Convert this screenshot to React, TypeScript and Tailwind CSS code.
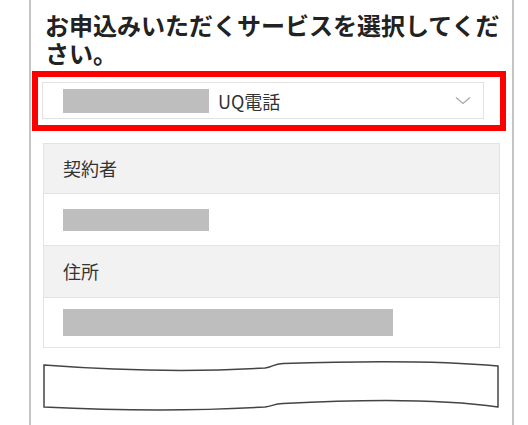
import React from "react";

export default function App() {
  return (
    <div
      className="w-[528px] h-[425px] bg-white overflow-hidden"
      style={{ fontFamily: '"Noto Sans CJK JP", "Noto Sans", sans-serif' }}
    >
      <div className="ml-[29px] w-[485px] h-[425px] border-x-2 border-[#c4c4c4] flex flex-col">
        <h1 className="pl-[14px] pt-[11px] w-[474px] text-[24px] leading-[28px] font-bold text-[#222]">
          お申込みいただくサービスを選択してください。
        </h1>

        <div className="mt-[4px] ml-[1px] w-[474px] h-[60px] border-[6px] border-[#ff0000] pt-[5px] pl-[4px]">
          <div className="w-[442px] h-[37px] border border-[#e2e2e2] bg-white flex items-center pl-[20px] pr-[12px]">
            <div className="w-[146px] h-[24px] bg-[#bebebe]" />
            <span className="ml-[9px] text-[18px] leading-none text-[#333]">UQ電話</span>
            <svg className="ml-auto" width="16" height="9" viewBox="0 0 16 9" fill="none">
              <path d="M1 1.5 L8 7.5 L15 1.5" stroke="#a8a8a8" strokeWidth="1.3" />
            </svg>
          </div>
        </div>

        <div className="mt-[12px] ml-[12px] w-[457px] border border-[#e3e3e3] flex flex-col text-[18px] text-[#333]">
          <div className="h-[50px] bg-[#f2f2f2] border-b border-[#e3e3e3] flex items-center pl-[19px]">
            契約者
          </div>
          <div className="h-[52px] bg-white border-b border-[#e3e3e3] flex items-center pl-[19px]">
            <div className="w-[146px] h-[22px] bg-[#bebebe]" />
          </div>
          <div className="h-[52px] bg-[#f2f2f2] border-b border-[#e3e3e3] flex items-center pl-[19px]">
            住所
          </div>
          <div className="h-[49px] bg-white flex items-center pl-[19px]">
            <div className="w-[330px] h-[27px] bg-[#bebebe]" />
          </div>
        </div>

        <svg className="mt-[12px] ml-[12px]" width="456" height="52" viewBox="0 0 456 52" fill="none">
          <path
            d="M1 5 Q120 14 222 8 C230 7 230 4 240 3.5 Q380 -1 455 6 L455 47 Q380 36 240 43.5 C230 44 230 46 222 47 Q120 53 1 47 Z"
            fill="white"
            stroke="#444"
            strokeWidth="1.5"
          />
        </svg>
      </div>
    </div>
  );
}
